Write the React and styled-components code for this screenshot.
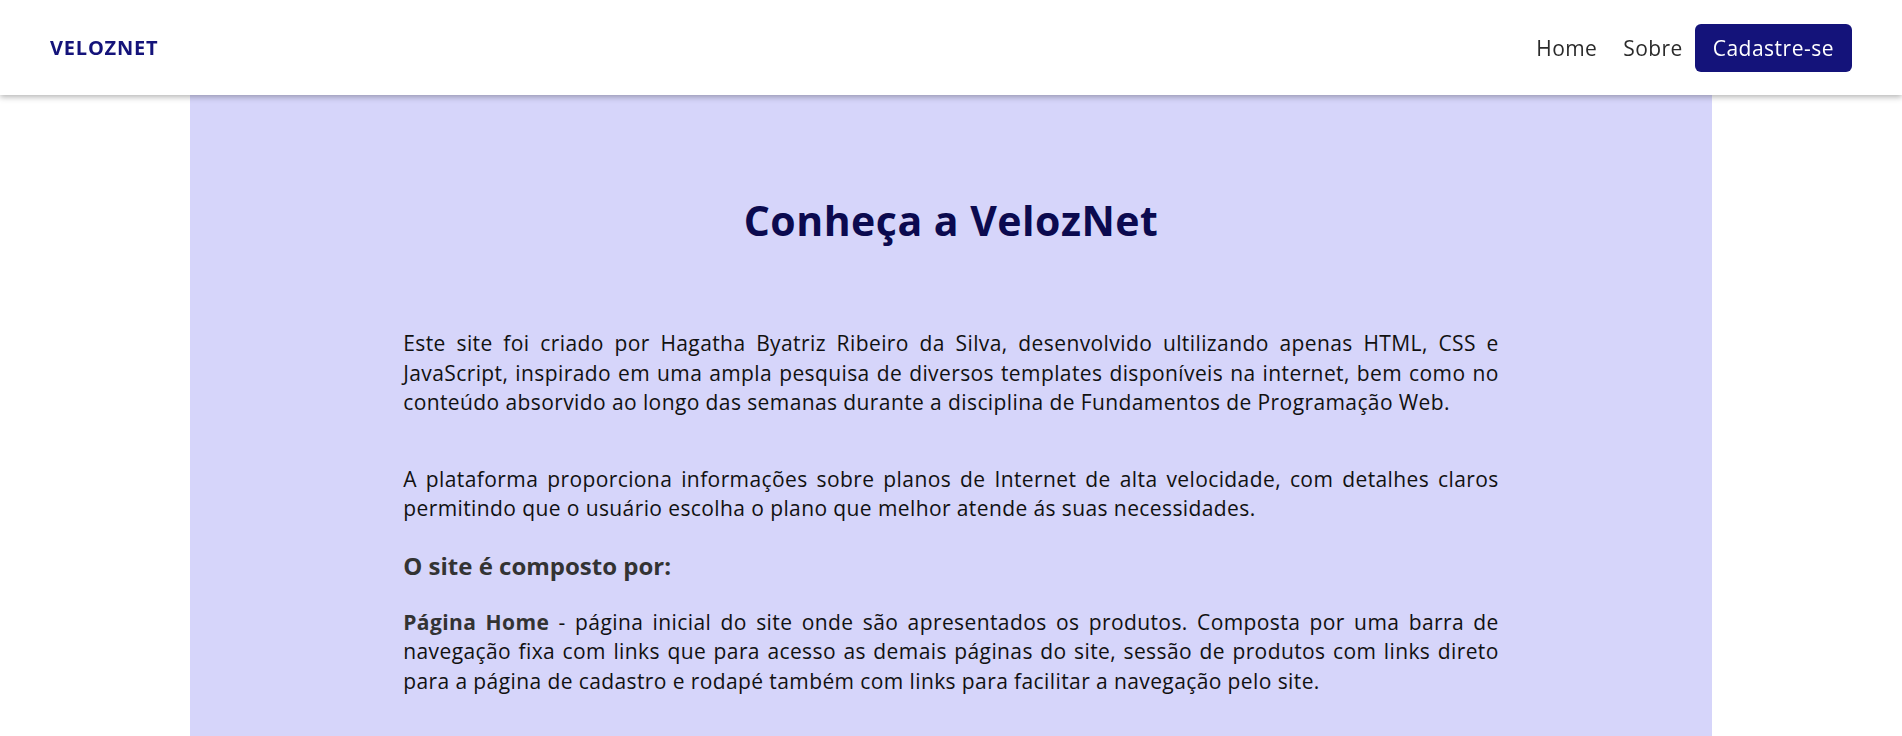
import React from 'react';
import styled, { createGlobalStyle } from 'styled-components';

const GlobalStyle = createGlobalStyle`
    * {
        box-sizing: border-box;
    }
    body {
        margin: 0;
        font-family: "Open Sans", "Liberation Sans", sans-serif;
        background: #ffffff;
        color: #111111;
    }
`;

const Header = styled.header`
    position: fixed;
    top: 0;
    left: 0;
    right: 0;
    height: 95px;
    padding: 0 50px;
    display: flex;
    align-items: center;
    justify-content: space-between;
    background: #ffffff;
    box-shadow: 0 2px 6px rgba(0, 0, 0, 0.3);
    z-index: 10;
`;

const Logo = styled.a`
    font-size: 20px;
    font-weight: 700;
    color: #14137a;
    text-decoration: none;
    letter-spacing: 0.8px;
`;

const Nav = styled.nav`
    display: flex;
    align-items: center;
    gap: 26px;
`;

const NavLink = styled.a`
    font-size: 21px;
    letter-spacing: 0.4px;
    color: #2b2b2b;
    text-decoration: none;
`;

const NavButton = styled.a`
    display: flex;
    align-items: center;
    height: 48px;
    padding: 0 18px;
    margin-left: -14px;
    border-radius: 6px;
    background: #14137a;
    color: #ffffff;
    font-size: 21px;
    letter-spacing: 0.5px;
    text-decoration: none;
`;

const Panel = styled.main`
    width: 80%;
    margin: 0 auto;
    min-height: 736px;
    padding: 196px 0 60px;
    background: #d6d5fa;
`;

const Title = styled.h1`
    margin: 0 0 84px;
    text-align: center;
    font-size: 41px;
    letter-spacing: 0.5px;
    line-height: 1.2;
    font-weight: 700;
    color: #0b0a4f;
`;

const Content = styled.section`
    width: 72%;
    margin: 0 auto;
`;

const Paragraph = styled.p`
    margin: 0 0 ${p => p.$gap || 47}px;
    font-size: 21px;
    letter-spacing: 0.4px;
    line-height: 29.5px;
    text-align: justify;
    color: #111111;
    strong {
        color: #333333;
    }
`;

const Subtitle = styled.h3`
    margin: 0 0 24px;
    font-size: 24px;
    line-height: 1.5;
    font-weight: 700;
    color: #333333;
`;

export default function App() {
    return (
        <>
            <GlobalStyle />
            <Header>
                <Logo href="#">VELOZNET</Logo>
                <Nav>
                    <NavLink href="#">Home</NavLink>
                    <NavLink href="#">Sobre</NavLink>
                    <NavButton href="#">Cadastre-se</NavButton>
                </Nav>
            </Header>
            <Panel>
                <Title>Conheça a VelozNet</Title>
                <Content>
                    <Paragraph>
                        Este site foi criado por Hagatha Byatriz Ribeiro da Silva, desenvolvido ultilizando apenas HTML, CSS e
                        JavaScript, inspirado em uma ampla pesquisa de diversos templates disponíveis na internet, bem como no
                        conteúdo absorvido ao longo das semanas durante a disciplina de Fundamentos de Programação Web.
                    </Paragraph>
                    <Paragraph $gap={24}>
                        A plataforma proporciona informações sobre planos de Internet de alta velocidade, com detalhes claros
                        permitindo que o usuário escolha o plano que melhor atende ás suas necessidades.
                    </Paragraph>
                    <Subtitle>O site é composto por:</Subtitle>
                    <Paragraph>
                        <strong>Página Home</strong> - página inicial do site onde são apresentados os produtos. Composta por uma barra de
                        navegação fixa com links que para acesso as demais páginas do site, sessão de produtos com links direto
                        para a página de cadastro e rodapé também com links para facilitar a navegação pelo site.
                    </Paragraph>
                </Content>
            </Panel>
        </>
    );
}
